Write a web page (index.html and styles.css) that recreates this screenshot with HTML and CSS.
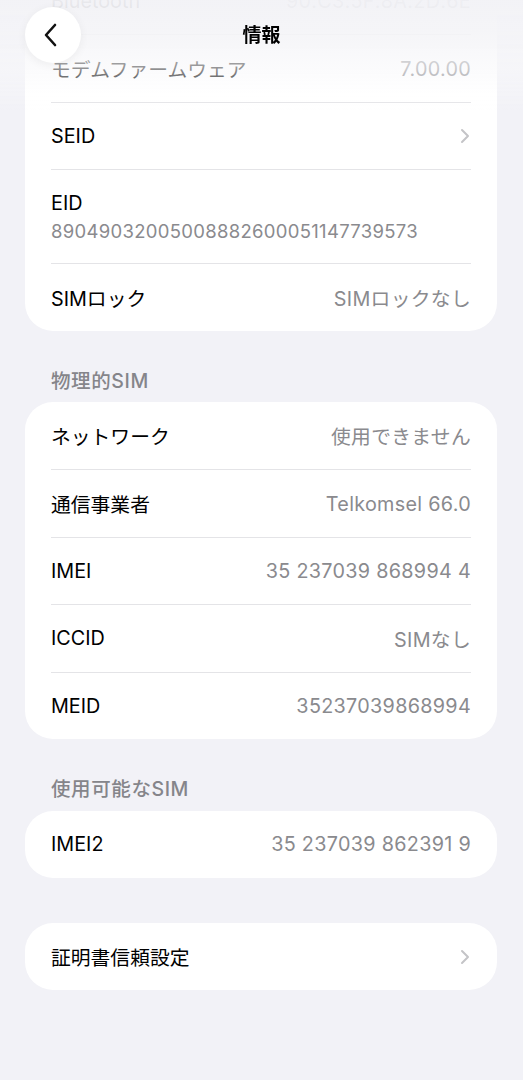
FILE: index.html
```html
<!DOCTYPE html>
<html lang="ja">
<head>
<meta charset="utf-8">
<title>情報</title>
<link rel="stylesheet" href="styles.css">
</head>
<body>
<main class="content">
  <section class="card card-first">
    <div class="row"><span class="label">Bluetooth</span><span class="value">90:C3:5F:8A:2D:6E</span></div>
    <div class="row"><span class="label">モデムファームウェア</span><span class="value">7.00.00</span></div>
    <div class="row"><span class="label">SEID</span>
      <svg class="chev" width="10" height="16" viewBox="0 0 10 16"><path d="M2 2 L8 8 L2 14" fill="none" stroke="#c4c4c7" stroke-width="2" stroke-linecap="round" stroke-linejoin="round"/></svg>
    </div>
    <div class="row row-tall"><span class="label">EID</span><span class="value">89049032005008882600051147739573</span></div>
    <div class="row"><span class="label">SIMロック</span><span class="value">SIMロックなし</span></div>
  </section>

  <h2 class="section-title">物理的SIM</h2>
  <section class="card">
    <div class="row"><span class="label">ネットワーク</span><span class="value">使用できません</span></div>
    <div class="row"><span class="label">通信事業者</span><span class="value">Telkomsel 66.0</span></div>
    <div class="row"><span class="label">IMEI</span><span class="value">35 237039 868994 4</span></div>
    <div class="row"><span class="label">ICCID</span><span class="value">SIMなし</span></div>
    <div class="row"><span class="label">MEID</span><span class="value">35237039868994</span></div>
  </section>

  <h2 class="section-title">使用可能なSIM</h2>
  <section class="card">
    <div class="row"><span class="label">IMEI2</span><span class="value">35 237039 862391 9</span></div>
  </section>

  <section class="card card-spaced">
    <div class="row"><span class="label">証明書信頼設定</span>
      <svg class="chev" width="10" height="16" viewBox="0 0 10 16"><path d="M2 2 L8 8 L2 14" fill="none" stroke="#c4c4c7" stroke-width="2" stroke-linecap="round" stroke-linejoin="round"/></svg>
    </div>
  </section>
</main>

<header class="nav">
  <button class="back" aria-label="戻る">
    <svg width="20" height="26" viewBox="0 0 20 26"><path d="M14 3 L5 13 L14 23" fill="none" stroke="#111" stroke-width="2.6" stroke-linecap="round" stroke-linejoin="round"/></svg>
  </button>
  <h1 class="title">情報</h1>
</header>
</body>
</html>
```

FILE: styles.css
```css
* { box-sizing: border-box; }
html, body {
  margin: 0;
  padding: 0;
  background: #f2f2f7;
  font-family: "Inter", "Noto Sans CJK JP", sans-serif;
  color: #000;
}
.content {
  padding: 0 26px 120px 25px;
}
.card {
  background: #fff;
  border-radius: 28px;
  overflow: hidden;
}
.card-first {
  margin-top: -33px;
  border-radius: 0 0 28px 28px;
}
.card-spaced {
  margin-top: 45px;
}
.row {
  display: flex;
  align-items: center;
  justify-content: space-between;
  height: 67.4px;
  margin: 0 26px;
  border-top: 1px solid #e4e4e7;
  font-size: 19.8px;
}
.row:first-child { border-top: none; }
.row-tall {
  height: 94px;
  flex-direction: column;
  align-items: flex-start;
  justify-content: center;
  gap: 5px;
}
.label { color: #000; }
.value { color: #8a8a8e; letter-spacing: 0.3px; }
.row-tall .value { font-size: 18.5px; letter-spacing: 0.3px; }
.chev { margin-right: 1px; }
.section-title {
  margin: 38px 0 9.5px 26px;
  font-size: 19.5px;
  line-height: 24px;
  font-weight: 500;
  letter-spacing: 0.6px;
  color: #85858a;
}
.nav {
  position: fixed;
  top: 0;
  left: 0;
  right: 0;
  height: 112px;
  background: linear-gradient(to bottom,
    rgba(242,242,246,0.96) 0px,
    rgba(244,244,247,0.9) 30px,
    rgba(248,248,250,0.6) 68px,
    rgba(255,255,255,0.15) 95px,
    rgba(255,255,255,0) 112px);
}
.back {
  position: absolute;
  left: 25px;
  top: 7px;
  width: 56px;
  height: 56px;
  border: none;
  border-radius: 50%;
  background: #fff;
  box-shadow: 0 2px 10px rgba(0,0,0,0.06);
  display: flex;
  align-items: center;
  justify-content: center;
  padding: 0 4px 0 0;
}
.title {
  margin: 0;
  text-align: center;
  font-size: 19px;
  font-weight: 700;
  line-height: 72px;
}
```
